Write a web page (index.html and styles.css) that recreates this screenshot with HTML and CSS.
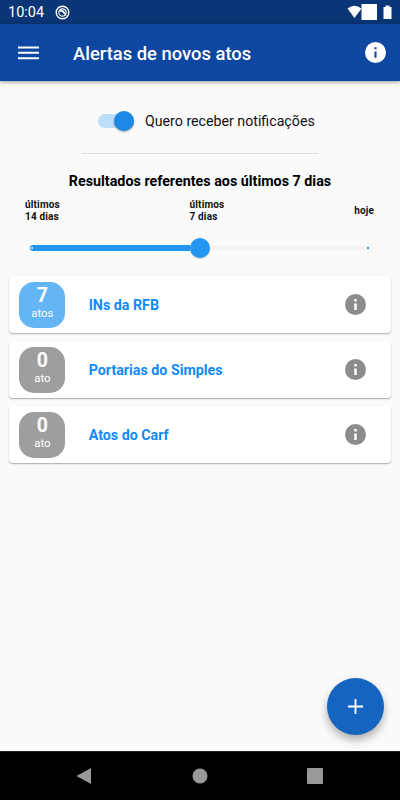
FILE: index.html
```html
<!DOCTYPE html>
<html lang="pt-BR">
<head>
    <meta charset="UTF-8">
    <meta name="viewport" content="width=device-width, initial-scale=1.0">
    <title>Alertas de novos atos</title>
    <link rel="stylesheet" href="styles.css">
</head>
<body>
    <div class="app">
        <div class="status-bar">
            <span class="hora">10:04</span>
            <svg class="status-app" viewBox="0 0 16 16" width="15" height="15">
                <circle cx="8" cy="8" r="6.7" fill="none" stroke="#fff" stroke-width="1.5"/>
                <circle cx="8" cy="8" r="3.9" fill="none" stroke="#fff" stroke-width="1.2"/>
                <path d="M5 5.5Q8.5 4 11 8L12.5 12.5 7.5 7.5 5 7z" fill="#fff"/>
            </svg>
            <svg class="status-icons" viewBox="0 0 46 16" width="46" height="16">
                <path d="M0.5 4.6Q7.5 -1.2 14.5 4.6L7.5 14Z" fill="#fff"/>
                <path d="M14.5 0h15.5v16H14.5zM36.5 3h2V1.5h4V3h2v12h-8z" fill="#fff"/>
            </svg>
        </div>

        <header class="app-bar">
            <svg class="menu" viewBox="0 0 21 14" width="21" height="14">
                <path d="M0 0.4h21v2H0zM0 5.8h21v2H0zM0 11.2h21v2H0z" fill="#fff"/>
            </svg>
            <h1>Alertas de novos atos</h1>
            <svg class="info" viewBox="2 2 20 20" width="21" height="21">
                <path d="M12 2a10 10 0 1 0 0 20 10 10 0 0 0 0-20zm1 15h-2v-6h2zm0-8h-2V7h2z" fill="#fff"/>
            </svg>
        </header>

        <main>
            <div class="notificacoes">
                <div class="switch"><span class="switch-thumb"></span></div>
                <span>Quero receber notificações</span>
            </div>
            <div class="divisor"></div>
            <h2>Resultados referentes aos últimos 7 dias</h2>

            <div class="periodos">
                <span>últimos<br>14 dias</span>
                <span>últimos<br>7 dias</span>
                <span class="hoje">hoje</span>
            </div>
            <div class="slider">
                <div class="slider-ativo"></div>
                <div class="slider-thumb"></div>
                <div class="slider-resto"></div>
            </div>

            <div class="lista">
                <div class="card">
                    <div class="contador novo"><strong>7</strong><span>atos</span></div>
                    <span class="nome">INs da RFB</span>
                    <svg viewBox="2 2 20 20" width="21" height="21">
                        <path d="M12 2a10 10 0 1 0 0 20 10 10 0 0 0 0-20zm1.2 15.2h-2.4v-6.2h2.4zm0-8h-2.4V6.8h2.4z" fill="#8c8c8c"/>
                    </svg>
                </div>
                <div class="card">
                    <div class="contador"><strong>0</strong><span>ato</span></div>
                    <span class="nome">Portarias do Simples</span>
                    <svg viewBox="2 2 20 20" width="21" height="21">
                        <path d="M12 2a10 10 0 1 0 0 20 10 10 0 0 0 0-20zm1.2 15.2h-2.4v-6.2h2.4zm0-8h-2.4V6.8h2.4z" fill="#8c8c8c"/>
                    </svg>
                </div>
                <div class="card">
                    <div class="contador"><strong>0</strong><span>ato</span></div>
                    <span class="nome">Atos do Carf</span>
                    <svg viewBox="2 2 20 20" width="21" height="21">
                        <path d="M12 2a10 10 0 1 0 0 20 10 10 0 0 0 0-20zm1.2 15.2h-2.4v-6.2h2.4zm0-8h-2.4V6.8h2.4z" fill="#8c8c8c"/>
                    </svg>
                </div>
            </div>

            <div class="fab">
                <svg viewBox="0 0 15 15" width="15" height="15">
                    <path d="M6.6 0h1.8v6.6H15v1.8H8.4V15H6.6V8.4H0V6.6h6.6z" fill="#fff"/>
                </svg>
            </div>
        </main>

        <nav class="nav-bar">
            <svg viewBox="0 0 16 18" width="16" height="18"><path d="M0.5 9L15 1v16z" fill="#999"/></svg>
            <svg viewBox="0 0 16 16" width="16" height="16"><circle cx="8" cy="8" r="7.5" fill="#999"/></svg>
            <svg viewBox="0 0 16 16" width="16" height="16"><rect width="16" height="16" rx="1" fill="#999"/></svg>
        </nav>
    </div>
</body>
</html>
```
FILE: styles.css
```css
body {
    margin: 0;
    font-family: Roboto, sans-serif;
    color: #111;
}

.app {
    display: flex;
    flex-direction: column;
    width: 400px;
    height: 800px;
    overflow: hidden;
    background: #fafafa;
}

svg {
    display: block;
    flex: none;
}

/* Barra de status */
.status-bar {
    display: flex;
    align-items: center;
    box-sizing: border-box;
    height: 24px;
    padding: 0 7px 0 8px;
    background: #0a3576;
    color: #fff;
}

.hora {
    width: 47px;
    font-size: 14.5px;
    line-height: 24px;
    padding-top: 2px;
}

.status-icons {
    margin-left: auto;
}

/* Barra do app */
.app-bar {
    display: flex;
    align-items: center;
    box-sizing: border-box;
    height: 57px;
    flex: none;
    padding: 0 14px 0 18px;
    background: #0d47a1;
    color: #fff;
    box-shadow: 0 1px 4px rgba(0,0,0,0.4);
}

h1 {
    margin: 0 auto 0 34px;
    padding-top: 2px;
    font-size: 18.4px;
    font-weight: 500;
    line-height: 24px;
}

main {
    display: flex;
    flex-direction: column;
    flex: 1;
}

.notificacoes {
    display: flex;
    align-items: center;
    height: 20px;
    margin: 30px 0 0 98px;
    font-size: 14.2px;
    white-space: nowrap;
}

.switch {
    display: flex;
    align-items: center;
    width: 36px;
    height: 14px;
    margin-right: 11px;
    border-radius: 7px;
    background: #bbdefb;
}

.switch-thumb {
    width: 20px;
    height: 20px;
    margin-left: 16px;
    flex: none;
    border-radius: 50%;
    background: #1e88e5;
    box-shadow: 0 1px 2px rgba(0,0,0,0.35);
}

.divisor {
    height: 1px;
    margin: 22px 82px 0;
    background: #dedede;
}

h2 {
    margin: 17px 0 0;
    font-size: 14.3px;
    font-weight: 700;
    line-height: 20px;
    text-align: center;
    color: #000;
}

/* Controle de período */
.periodos {
    display: flex;
    justify-content: space-between;
    align-items: center;
    margin: 8px 26px 0 25px;
    font-size: 10px;
    font-weight: 700;
    line-height: 12px;
    letter-spacing: 0.15px;
}

.slider {
    display: flex;
    align-items: center;
    height: 20px;
    margin: 15px 30px 0;
}

.slider-ativo {
    flex: 1;
    height: 6px;
    border-radius: 3px 0 0 3px;
    background: radial-gradient(circle at 2px 3px, #bbdefb 1px, #2196f3 1.5px);
}

.slider-thumb {
    width: 20px;
    height: 20px;
    border-radius: 50%;
    background: #2196f3;
    box-shadow: 0 1px 1px rgba(0,0,0,0.2);
}

.slider-resto {
    flex: 1;
    height: 4px;
    border-radius: 0 2px 2px 0;
    background: radial-gradient(circle at 158px 2px, #2196f3 0.8px, #f3f3f3 1.5px);
}

/* Lista de alertas */
.lista {
    display: flex;
    flex-direction: column;
    gap: 8.2px;
    margin: 18px 9px 0;
}

.card {
    display: flex;
    align-items: center;
    box-sizing: border-box;
    height: 57px;
    padding: 0 25px 0 10.4px;
    border-radius: 4px;
    background: #fff;
    box-shadow: 0 1px 1.5px rgba(0,0,0,0.32);
}

.contador {
    box-sizing: border-box;
    width: 46px;
    height: 46px;
    padding-top: 3px;
    border-radius: 15px;
    background: #9e9e9e;
    color: #fff;
    text-align: center;
}

.contador.novo {
    background: #64b5f6;
}

.contador strong {
    display: block;
    font-size: 19.5px;
    line-height: 21px;
}

.contador span {
    display: block;
    font-size: 11.4px;
    line-height: 14px;
}

.nome {
    margin: 0 auto 0 23.3px;
    font-size: 14.25px;
    font-weight: 700;
    color: #1389f5;
}

.fab {
    display: flex;
    align-items: center;
    justify-content: center;
    width: 57px;
    height: 57px;
    margin: auto 16.5px 16.5px auto;
    border-radius: 50%;
    background: #1565c0;
    box-shadow: 0 5px 8px rgba(0,0,0,0.3);
}

/* Barra de navegação */
.nav-bar {
    display: flex;
    align-items: center;
    justify-content: space-between;
    box-sizing: border-box;
    height: 49px;
    flex: none;
    padding: 0 77px 0 76px;
    border-top: 1px solid #222;
    background: #000;
}
```
